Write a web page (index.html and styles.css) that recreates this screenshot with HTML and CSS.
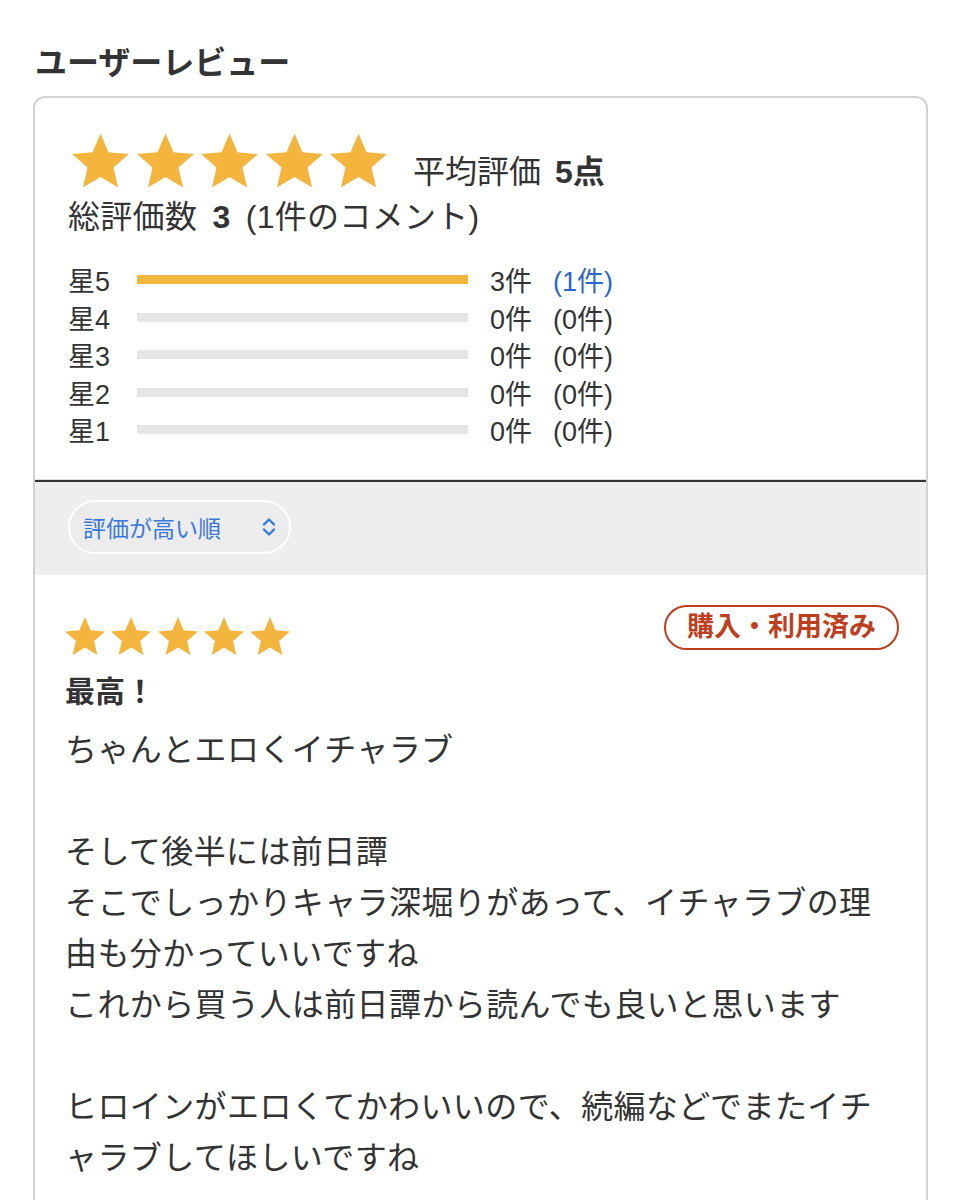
FILE: index.html
```html
<!DOCTYPE html>
<html lang="ja">
<head>
<meta charset="utf-8">
<title>ユーザーレビュー</title>
<link rel="stylesheet" href="styles.css">
</head>
<body>
<h2 class="page-title">ユーザーレビュー</h2>
<section class="card">
  <div class="summary">
    <div class="avg-row">
      <div class="stars stars-lg">
        <svg viewBox="2 2 20 19"><path d="M12 17.27L18.18 21l-1.64-7.03L22 9.24l-7.19-.61L12 2 9.19 8.63 2 9.24l5.46 4.730L5.82 21z"/></svg>
        <svg viewBox="2 2 20 19"><path d="M12 17.27L18.18 21l-1.64-7.03L22 9.24l-7.19-.61L12 2 9.19 8.63 2 9.24l5.46 4.73L5.82 21z"/></svg>
        <svg viewBox="2 2 20 19"><path d="M12 17.27L18.18 21l-1.64-7.03L22 9.24l-7.19-.61L12 2 9.19 8.63 2 9.24l5.46 4.73L5.82 21z"/></svg>
        <svg viewBox="2 2 20 19"><path d="M12 17.27L18.18 21l-1.64-7.03L22 9.24l-7.19-.61L12 2 9.19 8.63 2 9.24l5.46 4.73L5.82 21z"/></svg>
        <svg viewBox="2 2 20 19"><path d="M12 17.27L18.18 21l-1.64-7.03L22 9.24l-7.19-.61L12 2 9.19 8.63 2 9.24l5.46 4.73L5.82 21z"/></svg>
      </div>
      <div class="avg-text">平均評価 <b>5点</b></div>
    </div>
    <div class="total">総評価数 <b>3</b> (1件のコメント)</div>
    <div class="bars">
      <div class="bar-row">
        <span class="bar-label">星5</span>
        <span class="bar"><span class="bar-fill" style="width:100%"></span></span>
        <span class="bar-count">3件</span>
        <span class="bar-comments link">(1件)</span>
      </div>
      <div class="bar-row">
        <span class="bar-label">星4</span>
        <span class="bar"><span class="bar-fill" style="width:0%"></span></span>
        <span class="bar-count">0件</span>
        <span class="bar-comments">(0件)</span>
      </div>
      <div class="bar-row">
        <span class="bar-label">星3</span>
        <span class="bar"><span class="bar-fill" style="width:0%"></span></span>
        <span class="bar-count">0件</span>
        <span class="bar-comments">(0件)</span>
      </div>
      <div class="bar-row">
        <span class="bar-label">星2</span>
        <span class="bar"><span class="bar-fill" style="width:0%"></span></span>
        <span class="bar-count">0件</span>
        <span class="bar-comments">(0件)</span>
      </div>
      <div class="bar-row">
        <span class="bar-label">星1</span>
        <span class="bar"><span class="bar-fill" style="width:0%"></span></span>
        <span class="bar-count">0件</span>
        <span class="bar-comments">(0件)</span>
      </div>
    </div>
  </div>
  <div class="sort-bar">
    <div class="sort-select">
      <span>評価が高い順</span>
      <svg class="chev" viewBox="0 0 16 24"><path d="M3 9.5L8 4.5L13 9.5M3 14.5L8 19.5L13 14.5"/></svg>
    </div>
  </div>
  <article class="review">
    <div class="review-head">
      <div class="stars stars-sm">
        <svg viewBox="2 2 20 19"><path d="M12 17.27L18.18 21l-1.64-7.03L22 9.24l-7.19-.61L12 2 9.19 8.63 2 9.24l5.46 4.73L5.82 21z"/></svg>
        <svg viewBox="2 2 20 19"><path d="M12 17.27L18.18 21l-1.64-7.03L22 9.24l-7.19-.61L12 2 9.19 8.63 2 9.24l5.46 4.73L5.82 21z"/></svg>
        <svg viewBox="2 2 20 19"><path d="M12 17.27L18.18 21l-1.64-7.03L22 9.24l-7.19-.61L12 2 9.19 8.63 2 9.24l5.46 4.73L5.82 21z"/></svg>
        <svg viewBox="2 2 20 19"><path d="M12 17.27L18.18 21l-1.64-7.03L22 9.24l-7.19-.61L12 2 9.19 8.63 2 9.24l5.46 4.73L5.82 21z"/></svg>
        <svg viewBox="2 2 20 19"><path d="M12 17.27L18.18 21l-1.64-7.03L22 9.24l-7.19-.61L12 2 9.19 8.63 2 9.24l5.46 4.73L5.82 21z"/></svg>
      </div>
      <span class="badge">購入・利用済み</span>
    </div>
    <h3 class="review-title">最高！</h3>
    <p class="review-body">ちゃんとエロくイチャラブ<br><br>そして後半には前日譚<br>そこでしっかりキャラ深堀りがあって、イチャラブの理由も分かっていいですね<br>これから買う人は前日譚から読んでも良いと思います<br><br>ヒロインがエロくてかわいいので、続編などでまたイチャラブしてほしいですね</p>
  </article>
</section>
</body>
</html>
```

FILE: styles.css
```css
html, body {
  margin: 0;
  padding: 0;
  background: #ffffff;
}
body {
  font-family: "Liberation Sans", "Noto Sans CJK JP", sans-serif;
  color: #333333;
}
.page-title {
  margin: 0;
  padding: 43px 0 0 35px;
  font-size: 32px;
  line-height: 40px;
  font-weight: 700;
  color: #333333;
}
.card {
  margin: 13px 0 0 33px;
  width: 895px;
  box-sizing: border-box;
  border: 2px solid #d2d2d2;
  border-radius: 12px;
  overflow: hidden;
}
.summary {
  padding: 35px 33px 30px 33px;
  border-bottom: 1px solid #dcdcdc;
}
.avg-row {
  display: flex;
  align-items: flex-end;
}
.stars {
  display: flex;
}
.stars svg {
  fill: #f3b53d;
  display: block;
}
.stars-lg {
  gap: 7.5px;
  margin-left: 4px;
}
.stars-lg svg {
  width: 57px;
  height: 55px;
}
.avg-text {
  margin-left: 26px;
  font-size: 32px;
  line-height: 40px;
  margin-bottom: -4px;
  word-spacing: 5px;
}
.avg-text b, .total b {
  font-weight: 700;
}
.total {
  margin-top: 9px;
  font-size: 32px;
  line-height: 40px;
  word-spacing: 6px;
  letter-spacing: 0.3px;
}
.bars {
  margin-top: 24px;
}
.bar-row {
  display: flex;
  align-items: center;
  height: 37.5px;
  font-size: 27px;
}
.bar-label {
  width: 69px;
  flex: none;
}
.bar {
  width: 331px;
  height: 9px;
  background: #e5e5e5;
  flex: none;
  display: block;
}
.bar-fill {
  display: block;
  height: 100%;
  background: #f0b63e;
}
.bar-count {
  margin-left: 22px;
  width: 63px;
  flex: none;
}
.bar-comments.link {
  color: #2b66c8;
}
.sort-bar {
  border-top: 2px solid #333333;
  background: #eeeeee;
  padding: 18px 33px 21px 33px;
}
.sort-select {
  width: 223px;
  height: 54px;
  box-sizing: border-box;
  border: 2px solid #ffffff;
  border-radius: 27px;
  background: #ececec;
  display: flex;
  align-items: center;
  justify-content: space-between;
  padding: 0 12px 0 13px;
  color: #3a78dc;
  font-size: 23px;
}
.chev {
  width: 16px;
  height: 24px;
  fill: none;
  stroke: #3a78dc;
  stroke-width: 2.4;
  stroke-linecap: round;
  stroke-linejoin: round;
}
.review {
  padding: 30px 27px 60px 30px;
}
.review-head {
  display: flex;
  justify-content: space-between;
  align-items: flex-start;
}
.stars-sm {
  margin-top: 12px;
  gap: 6.3px;
}
.stars-sm svg {
  width: 40px;
  height: 38px;
}
.badge {
  height: 45px;
  box-sizing: border-box;
  border: 2px solid #bd3f1f;
  border-radius: 23px;
  color: #bd3f1f;
  font-weight: 700;
  font-size: 27px;
  line-height: 41px;
  padding: 0 21px;
}
.review-title {
  margin: 17px 0 0 0;
  font-size: 30px;
  line-height: 40px;
  font-weight: 700;
}
.review-body {
  margin: 13px 0 0 0;
  font-size: 32px;
  line-height: 51px;
  letter-spacing: 0.4px;
  line-break: loose;
}
```
